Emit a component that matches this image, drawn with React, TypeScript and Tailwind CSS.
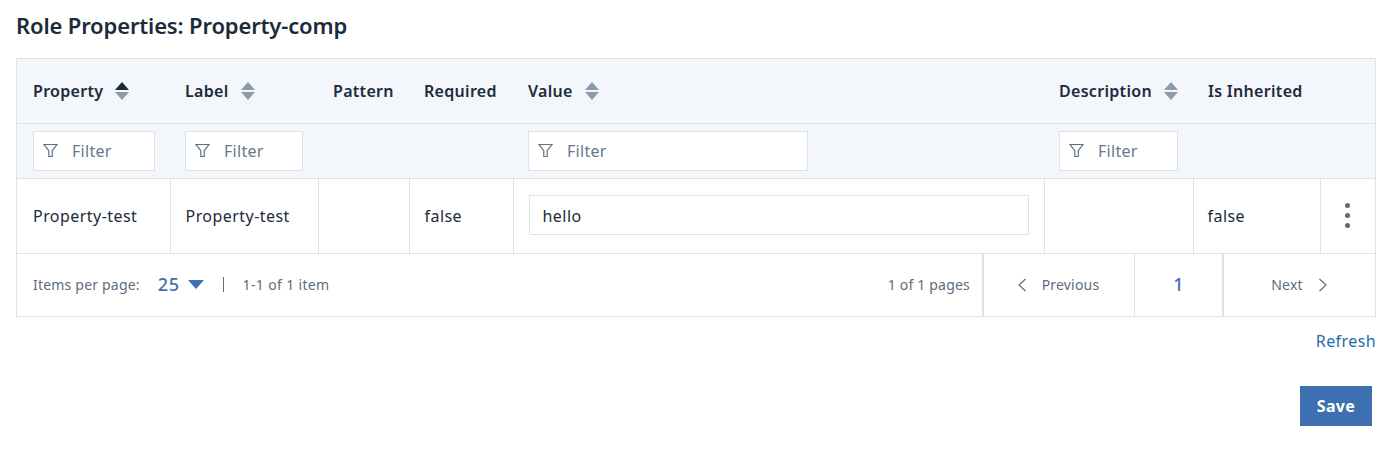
const font = 'font-["Noto_Sans",sans-serif]'

function SortIcon({ active = false }: { active?: boolean }) {
  return (
    <svg width="14" height="18" viewBox="0 0 14 18" className="shrink-0">
      <path d="M7 0 L14 8 L0 8 Z" fill={active ? '#1c2b3a' : '#8d9aa8'} />
      <path d="M7 18 L14 10 L0 10 Z" fill="#8d9aa8" />
    </svg>
  )
}

function FunnelIcon() {
  return (
    <svg width="15" height="15" viewBox="0 0 15 15" fill="none" stroke="#5f6f80" strokeWidth="1.2" className="shrink-0">
      <path d="M1 1.5 H14 L9.2 7.6 V13.5 H5.8 V7.6 Z" />
    </svg>
  )
}

function FilterInput({ width }: { width: string }) {
  return (
    <div className={`h-10 ${width} flex items-center bg-white border border-[#dde2e8] pl-[9px] text-[#68788a]`}>
      <FunnelIcon />
      <span className="ml-[14px] text-[16px] tracking-[0.3px]">Filter</span>
    </div>
  )
}

function HeadCell({ label, sort, active, pad = 'pl-[15px]' }: { label: string; sort?: boolean; active?: boolean; pad?: string }) {
  return (
    <th className={`${pad} text-left font-semibold text-[16px] tracking-[0.3px] text-[#1c2b3a] whitespace-nowrap`}>
      <div className="flex items-center gap-[12px]">
        {label}
        {sort && <SortIcon active={active} />}
      </div>
    </th>
  )
}

export default function App() {
  return (
    <div className={`${font} w-[1398px] h-[463px] bg-white overflow-hidden px-4`}>
      <h1 className="h-[58px] pt-[9px] text-[22px] leading-[32px] tracking-[-0.15px] font-semibold text-[#1c2b3a]">
        Role Properties: Property-comp
      </h1>

      <div className="w-[1360px] border border-[#dde2e8]">
        <table className="w-full table-fixed border-collapse">
          <colgroup>
            <col className="w-[153px]" />
            <col className="w-[148px]" />
            <col className="w-[91px]" />
            <col className="w-[104px]" />
            <col className="w-[531px]" />
            <col className="w-[149px]" />
            <col className="w-[127px]" />
            <col />
          </colgroup>
          <thead className="bg-[#f3f6fb]">
            <tr className="h-[64px] border-b border-[#dde2e8]">
              <HeadCell label="Property" sort active pad="pl-4" />
              <HeadCell label="Label" sort />
              <HeadCell label="Pattern" />
              <HeadCell label="Required" />
              <HeadCell label="Value" sort />
              <HeadCell label="Description" sort />
              <HeadCell label="Is Inherited" />
              <th />
            </tr>
            <tr className="h-[55px] border-b border-[#dde2e8]">
              <td className="pl-4"><FilterInput width="w-[122px]" /></td>
              <td className="pl-[15px]"><FilterInput width="w-[118px]" /></td>
              <td />
              <td />
              <td className="pl-[15px]"><FilterInput width="w-[280px]" /></td>
              <td className="pl-[15px]"><FilterInput width="w-[119px]" /></td>
              <td />
              <td />
            </tr>
          </thead>
          <tbody>
            <tr className="h-[75px] border-b border-[#dde2e8] text-[16px] tracking-[0.45px] text-[#1c2b3a]">
              <td className="pl-4 border-r border-[#dde2e8]">Property-test</td>
              <td className="pl-[15px] border-r border-[#dde2e8]">Property-test</td>
              <td className="border-r border-[#dde2e8]" />
              <td className="pl-[15px] border-r border-[#dde2e8]">false</td>
              <td className="pl-[15px] pr-[15px] pb-[2px] border-r border-[#dde2e8]">
                <div className="h-10 flex items-center border border-[#dde2e8] pl-[13px] pt-[2px]">hello</div>
              </td>
              <td className="border-r border-[#dde2e8]" />
              <td className="pl-[14px] border-r border-[#dde2e8]">false</td>
              <td>
                <div className="flex flex-col items-center gap-[5px]">
                  <span className="w-[5px] h-[5px] rounded-full bg-[#5b6b7c]" />
                  <span className="w-[5px] h-[5px] rounded-full bg-[#5b6b7c]" />
                  <span className="w-[5px] h-[5px] rounded-full bg-[#5b6b7c]" />
                </div>
              </td>
            </tr>
          </tbody>
        </table>

        {/* Pagination */}
        <div className="h-[62px] flex items-center text-[14px] tracking-[0.2px] text-[#5d6d7e]">
          <div className="flex items-center pl-4">
            <span>Items per page:</span>
            <span className="ml-[18px] text-[18px] tracking-[0.6px] font-medium text-[#3d6fb1]">25</span>
            <svg width="16" height="9" viewBox="0 0 16 9" className="ml-2">
              <path d="M0 0 L16 0 L8 9 Z" fill="#3d6fb1" />
            </svg>
            <span className="ml-[19px] w-px h-[15px] bg-[#5d6d7e]" />
            <span className="ml-[19px] tracking-[0.35px]">1-1 of 1 item</span>
          </div>
          <span className="ml-auto mr-[12px]">1 of 1 pages</span>
          <div className="h-full w-[152px] flex items-center justify-center border-l-2 border-[#dde2e8] pr-[2px]">
            <svg width="10" height="14" viewBox="0 0 10 14" fill="none" stroke="#5d6d7e" strokeWidth="1.2" className="mr-[15px]">
              <path d="M8.5 1 L2 7 L8.5 13" />
            </svg>
            Previous
          </div>
          <div className="h-full w-[88px] flex items-center justify-center border-l border-[#dde2e8] text-[18px] font-medium text-[#3d6fb1]">
            1
          </div>
          <div className="h-full w-[153px] flex items-center justify-center border-l-2 border-[#dde2e8]">
            Next
            <svg width="10" height="14" viewBox="0 0 10 14" fill="none" stroke="#5d6d7e" strokeWidth="1.2" className="ml-[15px]">
              <path d="M1.5 1 L8 7 L1.5 13" />
            </svg>
          </div>
        </div>
      </div>

      <div className="w-[1360px] flex justify-end mt-[12px] text-[16px] leading-6 tracking-[0.4px] text-[#1a6fa8]">Refresh</div>

      <div className="w-[1356px] flex justify-end mt-[33px]">
        <button className="w-[72px] h-10 bg-[#3d6fb1] text-white font-bold text-[16px] tracking-[0.3px]">Save</button>
      </div>
    </div>
  )
}
